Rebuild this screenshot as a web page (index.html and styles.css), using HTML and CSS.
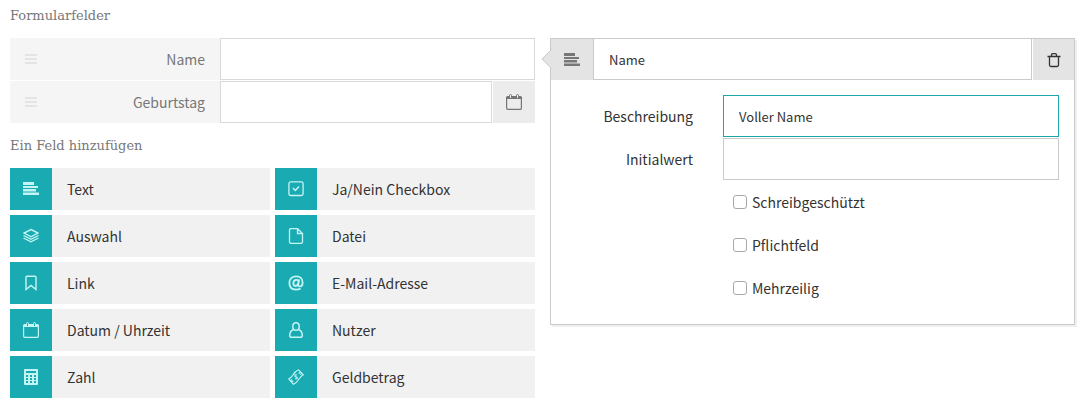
FILE: index.html
```html
<!DOCTYPE html>
<html lang="de">
<head>
<meta charset="utf-8">
<meta name="viewport" content="width=device-width, initial-scale=1">
<title>Formularfelder</title>
<link rel="stylesheet" href="styles.css">
</head>
<body>
<svg class="sprite" aria-hidden="true">
  <symbol id="text" viewBox="0 0 16 16"><path fill="currentColor" d="M0 1h11v3H0zM0 5h15v2H0zM0 8h13v2.500H0zM0 11.500h16V14H0z"/></symbol>
  <symbol id="calendar" viewBox="0 0 16 16"><path fill="none" stroke="currentColor" stroke-width="1.200" d="M.6 4.500h14.800V14a1.400 1.400 0 0 1-1.400 1.400H2A1.400 1.400 0 0 1 .6 14z"/><path fill="currentColor" d="M0 5V3.500Q0 2 1.500 2H3v2h3V2h4v2h3V2h1.500Q16 2 16 3.500V5z"/><path fill="none" stroke="currentColor" d="M3.500 4V1.500a1 1 0 0 1 2 0V4M10.500 4V1.500a1 1 0 0 1 2 0V4"/></symbol>
  <symbol id="layers" viewBox="0 0 16 16"><path fill="none" stroke="currentColor" stroke-width="1.400" d="M8 1.500l7 3.500-7 3.800L1 5zM.5 7.500L8 11.300l7.500-3.800M.5 10L8 13.800l7.500-3.800"/></symbol>
  <symbol id="bookmark" viewBox="0 0 16 16"><path fill="none" stroke="currentColor" stroke-width="1.400" d="M3 14.500V2.300a1 1 0 0 1 1-1h8a1 1 0 0 1 1 1v12.200L8 10.500z"/></symbol>
  <symbol id="number" viewBox="0 0 16 16"><path fill="currentColor" fill-rule="evenodd" d="M2 0h12q1 0 1 1v14q0 1-1 1H2q-1 0-1-1V1q0-1 1-1zM3 2v2h10V2zM3 6v2h2V6zM7 6v2h2V6zM11 6v2h2V6zM3 9v2h2V9zM7 9v2h2V9zM11 9v2h2V9zM3 12v2h2v-2zM7 12v2h2v-2zM11 12v2h2v-2z"/></symbol>
  <symbol id="check" viewBox="0 0 16 16"><rect x=".9" y=".9" width="14.200" height="13.600" rx="1.800" fill="none" stroke="currentColor" stroke-width="1.300"/><path fill="none" stroke="currentColor" stroke-width="1.500" d="M5 7l2.300 2.500L11 5.500"/></symbol>
  <symbol id="file" viewBox="0 0 16 16"><path fill="none" stroke="currentColor" stroke-width="1.300" d="M9.500.6H3A1.500 1.500 0 0 0 1.500 2v12A1.500 1.500 0 0 0 3 15.400h10a1.500 1.500 0 0 0 1.500-1.400V5.500zM9.500.6v4.900h5"/></symbol>
  <symbol id="mail" viewBox="1 1 14 14"><path fill="none" stroke="currentColor" stroke-width="1.600" d="M10.700 4.800L10 9q-.4 2 1.200 2c1.700 0 2.600-1.500 2.600-3.500C13.800 4 11.500 2.200 8.300 2.200 4.600 2.200 2.200 4.600 2.200 8.100c0 3.600 2.300 5.700 5.800 5.700q2.300 0 4-1M10.300 7.200C10.300 5.900 9.400 5.300 8.300 5.300 6.800 5.300 5.700 6.600 5.700 8.300c0 1.500.8 2.300 1.900 2.300 1.500 0 2.400-1.500 2.700-3.400z"/></symbol>
  <symbol id="user" viewBox="0 0 16 16"><path fill="none" stroke="currentColor" stroke-width="1.500" d="M8 .8C5.900.8 4.800 2.400 4.800 4.400S6 8.300 8 8.300s3.200-1.900 3.200-3.900S10.100.8 8 .8zM5.500 7.500C3 8.500 1.700 10.500 1.700 13.500q0 1.800 1.500 1.800h9.600q1.500 0 1.500-1.800c0-3-1.300-5-3.800-6"/></symbol>
  <symbol id="money" viewBox="0 0 16 16"><path fill="none" stroke="currentColor" stroke-width="1.100" d="M.7 10C2.500 9 3.600 8 4.600 6.500 6 4 7.800 2 10.600.8L15.400 5.800c-1.900 1-3 2.100-4 3.700-1.500 2.400-3.200 4.600-6 5.800zM2.400 11.800L4 10.500M3.800 13.400l1.300-1.700M10.800 4.600l1.500-1.900M12.200 5.600l1.500-1.300"/><path fill="none" stroke="currentColor" stroke-width="1.100" d="M9 6.200C8.200 5.500 6.700 6.200 7 7.300c.4 1 1.700.1 2.200 1 .4 1-.9 1.900-2 1.200M6.700 5.400l.8.900M8.900 9.300l.7.900"/></symbol>
  <symbol id="trash" viewBox="0 0 16 16"><path fill="none" stroke="currentColor" stroke-width="1.300" d="M1.500 4.500h13M3.500 4.500V13A1.500 1.500 0 0 0 5 14.500h6a1.500 1.500 0 0 0 1.500-1.500V4.500M5.500 4V3q0-1.300 1.300-1.300h2.400q1.300 0 1.300 1.300v1"/></symbol>
  <symbol id="grip" viewBox="0 0 12 10"><path fill="currentColor" d="M0 0h12v2H0zM0 4h12v2H0zM0 8h12v2H0z"/></symbol>
</svg>
<main class="editor">
  <section class="fields">
    <h2 class="heading">Formularfelder</h2>
    <div class="field-list">
      <div class="field">
        <label class="field-label" for="f-name"><svg class="grip"><use href="#grip"/></svg>Name</label>
        <input class="box" id="f-name" type="text">
      </div>
      <div class="field">
        <label class="field-label" for="f-birth"><svg class="grip"><use href="#grip"/></svg>Geburtstag</label>
        <input class="box" id="f-birth" type="text">
        <button class="date-button" type="button" aria-label="Kalender"><svg class="icon"><use href="#calendar"/></svg></button>
      </div>
    </div>
    <h2 class="heading">Ein Feld hinzufügen</h2>
    <div class="palette">
      <button class="type" type="button"><span class="type-icon"><svg class="icon"><use href="#text"/></svg></span>Text</button>
      <button class="type" type="button"><span class="type-icon"><svg class="icon"><use href="#check"/></svg></span>Ja/Nein Checkbox</button>
      <button class="type" type="button"><span class="type-icon"><svg class="icon"><use href="#layers"/></svg></span>Auswahl</button>
      <button class="type" type="button"><span class="type-icon"><svg class="icon"><use href="#file"/></svg></span>Datei</button>
      <button class="type" type="button"><span class="type-icon"><svg class="icon"><use href="#bookmark"/></svg></span>Link</button>
      <button class="type" type="button"><span class="type-icon"><svg class="icon"><use href="#mail"/></svg></span>E-Mail-Adresse</button>
      <button class="type" type="button"><span class="type-icon"><svg class="icon"><use href="#calendar"/></svg></span>Datum / Uhrzeit</button>
      <button class="type" type="button"><span class="type-icon"><svg class="icon"><use href="#user"/></svg></span>Nutzer</button>
      <button class="type" type="button"><span class="type-icon"><svg class="icon"><use href="#number"/></svg></span>Zahl</button>
      <button class="type" type="button"><span class="type-icon"><svg class="icon"><use href="#money"/></svg></span>Geldbetrag</button>
    </div>
  </section>
  <section class="panel">
    <svg class="pointer" viewBox="0 0 11 20" aria-hidden="true"><path fill="#e4e4e4" d="M11 0L1 10l10 10z"/><path fill="none" stroke="#cacaca" d="M10.500 0.500L1 10l9.500 9.500"/></svg>
    <div class="panel-head">
      <span class="panel-type"><svg class="icon"><use href="#text"/></svg></span>
      <input class="box title-box" type="text" value="Name" aria-label="Name des Feldes">
      <button class="delete" type="button" aria-label="Löschen"><svg class="icon"><use href="#trash"/></svg></button>
    </div>
    <div class="panel-body">
      <label class="setting-label" for="desc">Beschreibung</label>
      <input class="box setting-box active" id="desc" type="text" value="Voller Name">
      <label class="setting-label" for="init">Initialwert</label>
      <input class="box setting-box" id="init" type="text">
      <label class="option"><input class="tick" type="checkbox">Schreibgeschützt</label>
      <label class="option"><input class="tick" type="checkbox">Pflichtfeld</label>
      <label class="option"><input class="tick" type="checkbox">Mehrzeilig</label>
    </div>
  </section>
</main>
</body>
</html>
```
FILE: styles.css
```css
* { box-sizing: border-box; }
body {
  margin: 0;
  background: #fff;
  color: #333;
  font: 14px/22px "Noto Sans CJK SC", "Noto Sans", sans-serif;
}
button, input { font: inherit; color: inherit; margin: 0; }
button { border: 0; padding: 0; cursor: pointer; }
.sprite { display: none; }
.icon { display: block; width: 16px; height: 16px; }

.editor {
  display: grid;
  grid-template-columns: minmax(0, 1fr) minmax(0, 1fr);
  gap: 15px;
  align-items: start;
  padding: 0 10px;
}
.heading {
  margin: 0;
  padding: 5px 0 11px;
  color: #777;
  font: 13px/22px "Roboto Slab", "DejaVu Serif", serif;
}
.field-list { display: grid; gap: 1px; padding-bottom: 7px; }
.field { display: flex; height: 42px; }
.field-label {
  display: flex;
  flex: 0 0 40%;
  align-items: center;
  justify-content: space-between;
  padding: 0 15px;
  background: #f5f5f5;
  color: #777;
}
.grip { width: 12px; height: 10px; color: #e4e4e4; }
.box {
  flex: 1;
  min-width: 0;
  height: 42px;
  padding: 0 15px;
  border: 1px solid #d9d9d9;
  border-radius: 0;
  background: #fff;
  font-size: 13px;
  outline: 0;
}
.date-button {
  display: grid;
  place-items: center;
  width: 42px;
  margin-left: 1px;
  background: #ececec;
  color: #757575;
}

.palette { display: grid; grid-template-columns: 1fr 1fr; gap: 5px; }
.type {
  display: flex;
  align-items: center;
  gap: 15px;
  height: 42px;
  background: #f1f1f1;
  text-align: left;
}
.type-icon {
  display: grid;
  place-items: center;
  width: 42px;
  height: 42px;
  background: #1aabb2;
  color: #c4f5f5;
}

.panel {
  position: relative;
  margin-top: 38px;
  border: 1px solid #cacaca;
  box-shadow: 2px 2px 0 #efefef;
}
.pointer {
  position: absolute;
  top: 10px;
  left: -10px;
  width: 11px;
  height: 20px;
}
.panel-head { display: flex; height: 41px; }
.panel-type, .delete {
  display: grid;
  place-items: center;
  flex: 0 0 42px;
  background: #e4e4e4;
  color: #777;
}
.delete { flex-basis: 41px; margin-left: 1px; color: #333; }
.title-box { height: 41px; border-color: #cacaca; border-top: 0; }
.panel-body {
  display: grid;
  grid-template-columns: 127px minmax(0, 1fr);
  gap: 1px 30px;
  padding: 15px;
}
.setting-label { align-self: center; text-align: right; }
.setting-box { border-color: #cacaca; }
.active { border-color: #1ba6ac; }
.option {
  display: flex;
  grid-column: 2;
  align-items: center;
  gap: 5px;
  height: 42px;
  padding-left: 10px;
}
.tick {
  appearance: none;
  width: 14px;
  height: 14px;
  border: 1px solid #a9a9a9;
  border-radius: 3px;
  background: #fff;
}
```
